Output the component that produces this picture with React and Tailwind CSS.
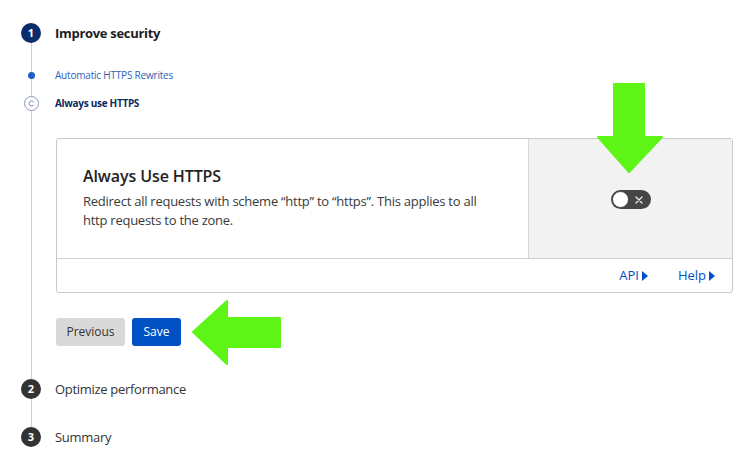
const DownArrow = () => (
  <svg width="66" height="90" viewBox="0 0 66 90" className="absolute left-[597px] top-[83px]">
    <path d="M17 1 H47 V54 H65 L32 89 L1 54 H17 Z" fill="#5cf516" stroke="#5cf516" strokeWidth="2" strokeLinejoin="round" />
  </svg>
);

const LeftArrow = () => (
  <svg width="90" height="66" viewBox="0 0 90 66" className="absolute left-[192px] top-[300px]">
    <path d="M1 32 L35 1 V18 H88 V47 H35 V64 Z" fill="#5cf516" stroke="#5cf516" strokeWidth="2" strokeLinejoin="round" />
  </svg>
);

const Caret = () => (
  <svg width="7" height="10" viewBox="0 0 7 10" className="inline-block ml-[2px]">
    <path d="M1 0 L7 5 L1 10 Z" fill="#0051c3" />
  </svg>
);

export default function App() {
  return (
    <div className="relative w-[750px] h-[465px] bg-white overflow-hidden font-['Open_Sans','Noto_Sans',sans-serif]">
      <div className="px-[21px] pt-[23px]">
        {/* Step 1 */}
        <div className="relative pb-[33px]">
          <div className="absolute left-[10px] top-5 bottom-0 w-px bg-[#cfcfcf]" />
          <div className="flex items-center gap-[14px] h-5">
            <div className="w-5 h-5 rounded-full bg-[#0a2c6b] text-white text-[11px] font-bold flex items-center justify-center">1</div>
            <span className="text-[13px] font-bold text-[#1d1d1d] tracking-[-0.3px] mt-[1px]">Improve security</span>
          </div>

          <div className="flex items-center gap-[14px] h-[14px] mt-[25px]">
            <div className="w-5 flex justify-center relative">
              <div className="w-[7px] h-[7px] rounded-full bg-[#1d5ec9]" />
            </div>
            <span className="text-[10px] text-[#2d62b8] tracking-[-0.2px]">Automatic HTTPS Rewrites</span>
          </div>

          <div className="flex items-center gap-[14px] h-[14px] mt-[14px]">
            <div className="w-5 flex justify-center relative">
              <div className="w-[15px] h-[15px] rounded-full border border-[#8a9bb5] bg-white flex items-center justify-center">
                <svg width="7" height="7" viewBox="0 0 7 7">
                  <path d="M5.5 1.8 A2.5 2.5 0 1 0 5.5 5.2" fill="none" stroke="#6d7f9c" strokeWidth="0.9" />
                </svg>
              </div>
            </div>
            <span className="text-[10px] font-bold text-[#0d2a5e] tracking-[-0.3px]">Always use HTTPS</span>
          </div>

          {/* Card */}
          <div className="ml-[35px] mt-[28px] w-[677px] border border-[#c9c9c9] rounded-[3px] overflow-hidden">
            <div className="flex h-[120px] border-b border-[#d0d0d0]">
              <div className="flex-1 pl-[26px] pt-[26px] pr-6">
                <h2 className="text-[16px] font-semibold text-[#222] leading-[22px] tracking-[-0.1px]">Always Use HTTPS</h2>
                <p className="mt-[5px] text-[13px] leading-[19px] text-[#3a3a3a] w-[410px] tracking-[-0.25px]">
                  Redirect all requests with scheme “http” to “https”. This applies to all http requests to the zone.
                </p>
              </div>
              <div className="w-[204px] bg-[#f2f2f2] border-l border-[#d6d6d6] flex items-center justify-center">
                <div className="w-[40px] h-[19px] rounded-full bg-[#454545] flex items-center justify-between pl-[1px] pr-[8px] mt-[2px]">
                  <div className="w-[17px] h-[17px] rounded-full bg-white border border-[#444]" />
                  <svg width="8" height="8" viewBox="0 0 8 8">
                    <path d="M1 1 L7 7 M7 1 L1 7" stroke="#e8e8e8" strokeWidth="1.4" strokeLinecap="round" />
                  </svg>
                </div>
              </div>
            </div>
            <div className="h-[33px] flex items-center justify-end gap-[30px] pr-[17px] text-[13px] text-[#0051c3]">
              <span className="flex items-center">API<Caret /></span>
              <span className="flex items-center">Help<Caret /></span>
            </div>
          </div>

          {/* Buttons */}
          <div className="ml-[35px] mt-[25px] flex gap-[7px]">
            <button className="h-[28px] w-[69px] rounded-[3px] bg-[#d9d9d9] text-[12px] text-[#333]">Previous</button>
            <button className="h-[28px] w-[49px] rounded-[3px] bg-[#0051c3] text-[12px] text-white">Save</button>
          </div>
        </div>

        {/* Step 2 */}
        <div className="relative pb-[28px]">
          <div className="absolute left-[10px] top-5 bottom-0 w-px bg-[#cfcfcf]" />
          <div className="flex items-center gap-[14px] h-5">
            <div className="w-5 h-5 rounded-full bg-[#333] text-white text-[11px] font-bold flex items-center justify-center">2</div>
            <span className="text-[13px] text-[#333] tracking-[-0.3px] mt-[1px]">Optimize performance</span>
          </div>
        </div>

        {/* Step 3 */}
        <div className="flex items-center gap-[14px] h-5">
          <div className="w-5 h-5 rounded-full bg-[#333] text-white text-[11px] font-bold flex items-center justify-center">3</div>
          <span className="text-[13px] text-[#333] tracking-[-0.3px] mt-[1px]">Summary</span>
        </div>
      </div>

      <DownArrow />
      <LeftArrow />
    </div>
  );
}
